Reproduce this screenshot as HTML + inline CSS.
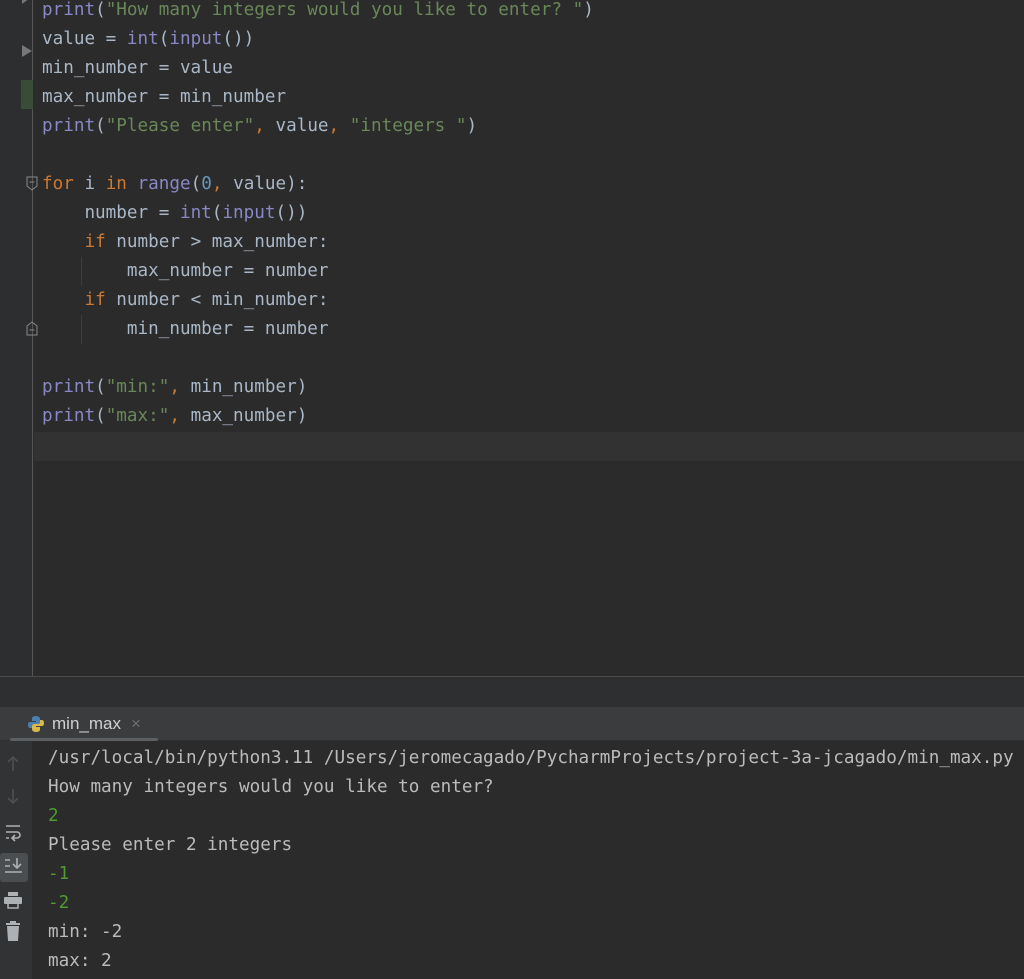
<!DOCTYPE html>
<html><head><meta charset="utf-8"><style>
*{margin:0;padding:0;box-sizing:border-box}
body{width:1024px;height:979px;background:#2b2b2b;overflow:hidden;position:relative;font-family:"DejaVu Sans Mono","Liberation Mono",monospace;font-size:17.64px;color:#a9b7c6}
.ed{position:absolute;left:0;top:0;width:1024px;height:676px;background:#2b2b2b}
.gut{position:absolute;left:0;top:0;width:33px;height:676px;background:#2d2e2f;border-right:1px solid #555}
.ln{position:absolute;left:42px;height:29px;line-height:29px;white-space:pre;letter-spacing:0}
.k{color:#cc7832}.b{color:#8888c6}.s{color:#6a8759}.n{color:#6897bb}
.cur{position:absolute;left:34px;top:432px;width:990px;height:29px;background:#323232}
.sep{position:absolute;left:0;top:676px;width:1024px;height:1px;background:#4b4b4b}
.strip{position:absolute;left:0;top:677px;width:1024px;height:30px;background:#2e2f31}
.tabs{position:absolute;left:0;top:707px;width:1024px;height:34px;background:#3b3c3e;border-bottom:1px solid #2f3032}
.con{position:absolute;left:0;top:741px;width:1024px;height:238px;background:#2b2b2b}
.tb{position:absolute;left:0;top:741px;width:32px;height:238px;background:#313335}
.cl{position:absolute;left:48px;height:29px;line-height:29px;white-space:pre;color:#bbbbbb}
.cl.g{color:#4f9b2f}
</style></head><body>
<div class="ed"></div>
<div class="gut"></div>
<div style="position:absolute;left:21px;top:80px;width:12px;height:29px;background:#384c38"></div>
<svg style="position:absolute;left:20px;top:0" width="14" height="60"><polygon points="2,-2 10,-2 2,4" fill="#777"/><polygon points="2,45 12,51 2,57" fill="#777"/></svg>
<svg style="position:absolute;left:26px;top:176px" width="13" height="16"><path d="M1,1H11V10L6,14L1,10Z" fill="none" stroke="#888"/><line x1="3.5" y1="6" x2="8.5" y2="6" stroke="#888"/></svg>
<svg style="position:absolute;left:26px;top:321px" width="13" height="16"><path d="M1,14H11V5L6,1L1,5Z" fill="none" stroke="#888"/><line x1="3.5" y1="9" x2="8.5" y2="9" stroke="#888"/></svg>
<div style="position:absolute;left:81px;top:257px;width:1px;height:29px;background:#3d3d3d"></div>
<div style="position:absolute;left:81px;top:315px;width:1px;height:29px;background:#3d3d3d"></div>
<div class="cur"></div>
<div class="ln" style="top:-4px"><span class="b">print</span>(<span class="s">"How many integers would you like to enter? "</span>)</div>
<div class="ln" style="top:25px">value = <span class="b">int</span>(<span class="b">input</span>())</div>
<div class="ln" style="top:54px">min_number = value</div>
<div class="ln" style="top:83px">max_number = min_number</div>
<div class="ln" style="top:112px"><span class="b">print</span>(<span class="s">"Please enter"</span><span class="k">,</span> value<span class="k">,</span> <span class="s">"integers "</span>)</div>
<div class="ln" style="top:170px"><span class="k">for</span> i <span class="k">in</span> <span class="b">range</span>(<span class="n">0</span><span class="k">,</span> value):</div>
<div class="ln" style="top:199px">    number = <span class="b">int</span>(<span class="b">input</span>())</div>
<div class="ln" style="top:228px">    <span class="k">if</span> number &gt; max_number:</div>
<div class="ln" style="top:257px">        max_number = number</div>
<div class="ln" style="top:286px">    <span class="k">if</span> number &lt; min_number:</div>
<div class="ln" style="top:315px">        min_number = number</div>
<div class="ln" style="top:373px"><span class="b">print</span>(<span class="s">"min:"</span><span class="k">,</span> min_number)</div>
<div class="ln" style="top:402px"><span class="b">print</span>(<span class="s">"max:"</span><span class="k">,</span> max_number)</div>
<div class="sep"></div><div class="strip"></div>
<div class="tabs">
<svg style="position:absolute;left:27px;top:8px" width="18" height="18" viewBox="0 0 18 18"><path d="M9,1C5,1 5,3 5,4V6H9V7H3C1,7 1,9 1,10C1,12 2,13 3,13H5V11C5,9.5 6,9 7,9H11C12,9 13,8 13,7V4C13,2 11,1 9,1Z" fill="#4a7fb0"/><path d="M9,17C13,17 13,15 13,14V12H9V11H15C17,11 17,9 17,8C17,6 16,5 15,5H13V7C13,8.5 12,9 11,9H7C6,9 5,10 5,11V14C5,16 7,17 9,17Z" fill="#d9b94a"/></svg>
<span style="position:absolute;left:52px;top:7px;font-family:'Liberation Sans',sans-serif;font-size:17px;color:#d0d0d0">min_max</span>
<span style="position:absolute;left:131px;top:7px;font-family:'Liberation Sans',sans-serif;font-size:17px;color:#6e6e6e">×</span>
<div style="position:absolute;left:10px;top:31px;width:148px;height:3px;border-radius:2px;background:#5d6063"></div>
</div>
<div class="con"></div><div class="tb"></div>
<svg style="position:absolute;left:0;top:741px" width="32" height="238">
<g stroke="#4d5052" stroke-width="1.6" fill="none"><path d="M13,30V16M8,21L13,16L18,21"/><path d="M13,48V62M8,57L13,62L18,57"/></g>
<g stroke="#aeb1b3" stroke-width="1.6" fill="none"><path d="M6,85H20M6,91H17a3,3 0 0 1 0,6H13M15,94L12,97L15,100M6,97H9"/></g>
<rect x="0" y="112" width="28" height="29" rx="3" fill="#4b4e50"/>
<g stroke="#aeb1b3" stroke-width="1.6" fill="none"><path d="M5,119H10M5,125H10M5,131H22M17,117V127M13,123L17,127L21,123"/></g>
<g fill="#aeb1b3"><rect x="8" y="151" width="10" height="4"/><rect x="4" y="156" width="18" height="7" rx="1"/><rect x="8" y="162" width="10" height="5" fill="none" stroke="#aeb1b3" stroke-width="1.5"/><rect x="6" y="182" width="14" height="2"/><rect x="10" y="180" width="6" height="2"/><path d="M7,185H19L18,200H8Z"/></g>
</svg>
<div class="cl" style="top:744px">/usr/local/bin/python3.11 /Users/jeromecagado/PycharmProjects/project-3a-jcagado/min_max.py</div>
<div class="cl" style="top:773px">How many integers would you like to enter?</div>
<div class="cl g" style="top:802px">2</div>
<div class="cl" style="top:831px">Please enter 2 integers</div>
<div class="cl g" style="top:860px">-1</div>
<div class="cl g" style="top:889px">-2</div>
<div class="cl" style="top:918px">min: -2</div>
<div class="cl" style="top:947px">max: 2</div>
</body></html>
